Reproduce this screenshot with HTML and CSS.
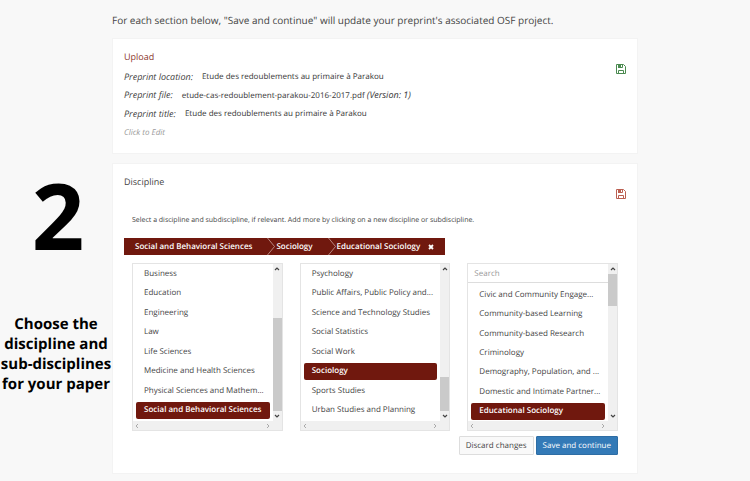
FILE: index.html
```html
<!DOCTYPE html>
<html lang="en">
<head>
  <meta charset="utf-8">
  <title>Submit a preprint</title>
  <link rel="stylesheet" href="styles.css">
</head>
<body>
  <svg class="sprite" width="0" height="0" aria-hidden="true">
    <symbol id="save" viewBox="0 0 10 10">
      <path d="M.5.5h7l2 2v7h-9z" fill="none" stroke="currentColor"/>
      <path d="M2.5.5v3h4v-3M2.5 9.5v-3h5v3" fill="none" stroke="currentColor"/>
      <path d="M2 1h3v3H2z" fill="currentColor"/>
    </symbol>
    <symbol id="up" viewBox="0 0 6 6"><path d="M1 4l2-2 2 2" fill="none" stroke="currentColor" stroke-width="1.2"/></symbol>
    <symbol id="down" viewBox="0 0 6 6"><path d="M1 2l2 2 2-2" fill="none" stroke="currentColor" stroke-width="1.2"/></symbol>
    <symbol id="left" viewBox="0 0 6 6"><path d="M4 1L2 3l2 2" fill="none" stroke="currentColor"/></symbol>
    <symbol id="right" viewBox="0 0 6 6"><path d="M2 1l2 2-2 2" fill="none" stroke="currentColor"/></symbol>
    <symbol id="chevron" viewBox="0 0 9 17"><path d="M.5 0l7 8.5-7 8.500" fill="none" stroke="currentColor" stroke-width=".8"/></symbol>
    <symbol id="times" viewBox="0 0 6 6"><path d="M1 1l4 4M5 1L1 5" fill="none" stroke="currentColor" stroke-width="1.800"/></symbol>
  </svg>

  <aside class="step">
    <div class="step-number">2</div>
    <p class="step-text">Choose the<br>discipline and<br>sub-disciplines<br>for your paper</p>
  </aside>

  <main class="content">
    <p class="intro">For each section below, "Save and continue" will update your preprint's associated OSF project.</p>

    <section class="card card-upload">
      <div class="card-body">
        <h2 class="upload-title">Upload</h2>
        <dl class="details">
          <div><dt>Preprint location:</dt><dd>Etude des redoublements au primaire à Parakou</dd></div>
          <div><dt>Preprint file:</dt><dd>etude-cas-redoublement-parakou-2016-2017.pdf <em>(Version: 1)</em></dd></div>
          <div><dt>Preprint title:</dt><dd>Etude des redoublements au primaire à Parakou</dd></div>
        </dl>
        <a class="edit" href="#upload">Click to Edit</a>
      </div>
      <svg class="save saved"><use href="#save"/></svg>
    </section>

    <section class="card card-discipline">
      <div class="card-head">
        <h2>Discipline</h2>
        <svg class="save unsaved"><use href="#save"/></svg>
      </div>
      <p class="hint">Select a discipline and subdiscipline, if relevant. Add more by clicking on a new discipline or subdiscipline.</p>

      <div class="crumbs">
        <span>Social and Behavioral Sciences</span>
        <svg class="chevron"><use href="#chevron"/></svg>
        <span>Sociology</span>
        <svg class="chevron"><use href="#chevron"/></svg>
        <span>Educational Sociology</span>
        <button class="remove" type="button" aria-label="Remove"><svg><use href="#times"/></svg></button>
      </div>

      <div class="pickers">
        <div class="picker">
          <div class="options">
            <button type="button">Business</button>
            <button type="button">Education</button>
            <button type="button">Engineering</button>
            <button type="button">Law</button>
            <button type="button">Life Sciences</button>
            <button type="button">Medicine and Health Sciences</button>
            <button type="button">Physical Sciences and Mathem...</button>
            <button type="button" class="selected">Social and Behavioral Sciences</button>
          </div>
          <div class="bar-y">
            <svg><use href="#up"/></svg>
            <div class="track track-end"><div class="thumb" style="height: 68%"></div></div>
            <svg><use href="#down"/></svg>
          </div>
          <div class="bar-x"><svg><use href="#left"/></svg><svg><use href="#right"/></svg></div>
        </div>

        <div class="picker">
          <div class="options">
            <button type="button">Psychology</button>
            <button type="button">Public Affairs, Public Policy and...</button>
            <button type="button">Science and Technology Studies</button>
            <button type="button">Social Statistics</button>
            <button type="button">Social Work</button>
            <button type="button" class="selected">Sociology</button>
            <button type="button">Sports Studies</button>
            <button type="button">Urban Studies and Planning</button>
          </div>
          <div class="bar-y">
            <svg><use href="#up"/></svg>
            <div class="track track-end"><div class="thumb" style="height: 25%"></div></div>
            <svg><use href="#down"/></svg>
          </div>
          <div class="bar-x"><svg><use href="#left"/></svg><svg><use href="#right"/></svg></div>
        </div>

        <div class="picker picker-search">
          <input class="search" type="text" placeholder="Search" aria-label="Search">
          <div class="options">
            <button type="button">Civic and Community Engage...</button>
            <button type="button">Community-based Learning</button>
            <button type="button">Community-based Research</button>
            <button type="button">Criminology</button>
            <button type="button">Demography, Population, and ...</button>
            <button type="button">Domestic and Intimate Partner...</button>
            <button type="button" class="selected">Educational Sociology</button>
          </div>
          <div class="bar-y">
            <svg><use href="#up"/></svg>
            <div class="track"><div class="thumb" style="height: 23%"></div></div>
            <svg><use href="#down"/></svg>
          </div>
          <div class="bar-x"><svg><use href="#left"/></svg><svg><use href="#right"/></svg></div>
        </div>
      </div>

      <div class="actions">
        <button class="btn" type="button">Discard changes</button>
        <button class="btn btn-primary" type="button">Save and continue</button>
      </div>
    </section>
  </main>
</body>
</html>
```
FILE: styles.css
```css
* {
  box-sizing: border-box;
}

body {
  display: flex;
  margin: 0;
  background: #f8f8f8;
  color: #444;
  font-family: "Open Sans", "Noto Sans", sans-serif;
  font-size: 8px;
  text-rendering: geometricPrecision;
}

h2, p, dl, dd {
  margin: 0;
}

h2 {
  font-size: 9px;
  line-height: 14px;
  font-weight: normal;
}

button, input {
  font: inherit;
  color: inherit;
  text-rendering: inherit;
}

.sprite {
  position: absolute;
}

.step {
  flex: 0 0 112px;
  padding-top: 165px;
  color: #000;
  font-weight: bold;
  text-align: center;
}

.step-number {
  padding-left: 4px;
  font-size: 92px;
  line-height: 100px;
}

.step-text {
  margin-top: 49px;
  font-size: 15px;
  line-height: 20px;
  white-space: nowrap;
}

.content {
  flex: 1;
  min-width: 0;
  padding: 13px 112px 7px 0;
}

.intro {
  margin-bottom: 11px;
  font-size: 10px;
  line-height: 14px;
}

.card {
  background: #fff;
  border: 1px solid #f3f3f3;
  padding: 11px;
}

.card-upload {
  display: flex;
  justify-content: space-between;
  min-height: 116px;
  margin-bottom: 9px;
}

.upload-title {
  color: #8c3a30;
}

.details {
  margin: 4px 0 5px;
  line-height: 18px;
}

.details div {
  display: flex;
}

.details dt {
  margin-right: 9px;
}

.details dt, .details em {
  font-size: 9px;
  font-style: italic;
}

.details dd {
  font-family: "Noto Sans", "Open Sans", sans-serif;
}

.edit {
  display: block;
  color: #999;
  font-style: italic;
  line-height: 10px;
  text-decoration: none;
}

.save {
  width: 10px;
  height: 10px;
}

.saved {
  margin-top: 14px;
  color: #4b8a50;
}

.unsaved {
  margin-top: 14px;
  color: #bb5f50;
}

.card-discipline {
  padding-bottom: 18px;
}

.card-head {
  display: flex;
  justify-content: space-between;
}

.hint {
  margin: 17px 8px 12px;
  font-size: 7px;
  line-height: 10px;
}

.crumbs {
  display: inline-flex;
  align-items: center;
  height: 17px;
  padding: 0 11px;
  background: #70180e;
  color: #fff;
  font-weight: 600;
  white-space: nowrap;
}

.chevron {
  width: 9px;
  height: 17px;
  margin-left: 15px;
  color: #c9a29d;
}

.remove {
  display: flex;
  margin-left: 8px;
  padding: 0;
  border: 0;
  background: none;
}

.remove svg {
  width: 6px;
  height: 6px;
}

.pickers {
  display: grid;
  grid-template-columns: repeat(3, 1fr);
  gap: 17px;
  margin: 8px 8px 5px;
}

.picker {
  display: grid;
  grid-template-columns: minmax(0, 1fr) 9px;
  grid-template-rows: 157px 9px;
  border: 1px solid #e4e4e4;
}

.picker-search {
  grid-template-rows: 19px 138px 9px;
}

.search {
  width: 100%;
  padding: 0 6px;
  border: 0;
  border-bottom: 1px solid #ddd;
  background: #fff;
}

.search::placeholder {
  color: #999;
  opacity: 1;
}

.options {
  display: grid;
  grid-template-columns: minmax(0, 1fr);
  grid-auto-rows: 1fr;
  gap: 2px;
  padding: 1px 3px 2px;
}

.picker-search .options {
  padding: 3px 3px 1px;
}

.options button {
  min-height: 0;
  padding: 0 8px;
  border: 0;
  border-radius: 2px;
  background: none;
  line-height: 12px;
  text-align: left;
  white-space: nowrap;
}

.options .selected {
  background: #70180e;
  color: #fff;
  font-weight: 600;
}

.bar-y {
  grid-column: 2;
  grid-row: 1;
  display: flex;
  flex-direction: column;
  align-items: center;
  padding: 2px 0;
  background: #f0f0f0;
  color: #444;
}

.picker-search .bar-y {
  grid-row: 1 / 3;
}

.bar-y svg, .bar-x svg {
  flex: none;
  width: 6px;
  height: 6px;
}

.track {
  flex: 1;
  display: flex;
  flex-direction: column;
  width: 100%;
  padding: 2px 0;
}

.track-end {
  justify-content: flex-end;
}

.thumb {
  background: #cacaca;
}

.bar-x {
  grid-column: 1 / 3;
  display: flex;
  justify-content: space-between;
  align-items: center;
  padding: 0 11px 0 1px;
  background: #f0f0f0;
  color: #aaa;
}

.actions {
  display: flex;
  justify-content: flex-end;
  gap: 2px;
  margin-right: 8px;
}

.btn {
  height: 19px;
  padding: 0 6px;
  border: 1px solid #ddd;
  border-radius: 1px;
  background: #f9f9f9;
}

.btn-primary {
  border-color: #2e6da4;
  background: #337ab7;
  color: #fff;
}
```
